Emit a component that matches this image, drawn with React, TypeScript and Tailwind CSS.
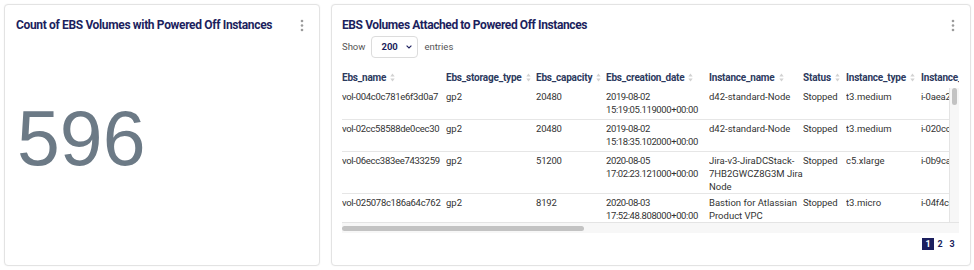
import React from "react";

const SortIcon = () => (
  <svg width="5" height="9" viewBox="0 0 5 9" className="ml-[4px] shrink-0">
    <path d="M2.5 0.6 L4.7 3.6 H0.3 Z" fill="#d2d2d2" />
    <path d="M2.5 8.4 L4.7 5.4 H0.3 Z" fill="#d2d2d2" />
  </svg>
);

const Kebab = () => (
  <svg width="4" height="13" viewBox="0 0 4 13" className="shrink-0">
    <circle cx="2" cy="2" r="1.3" fill="#9b9b9b" />
    <circle cx="2" cy="6.5" r="1.3" fill="#9b9b9b" />
    <circle cx="2" cy="11" r="1.3" fill="#9b9b9b" />
  </svg>
);

const columns = [
  { label: "Ebs_name", w: "w-[104px]", t: "tracking-[-0.3px]" },
  { label: "Ebs_storage_type", w: "w-[90px]", t: "tracking-[0px]" },
  { label: "Ebs_capacity", w: "w-[70px]", t: "tracking-[-0.2px]" },
  { label: "Ebs_creation_date", w: "w-[103px]", t: "tracking-[-0.4px]" },
  { label: "Instance_name", w: "w-[94px]", t: "tracking-[0px]" },
  { label: "Status", w: "w-[43px]", t: "tracking-[-0.1px]" },
  { label: "Instance_type", w: "w-[75px]", t: "tracking-[0px]" },
  { label: "Instance_id", w: "w-[120px]", t: "tracking-[-0.2px]" },
];

const rows: { h: string; cells: string[][] }[] = [
  {
    h: "h-[32px]",
    cells: [
      ["vol-004c0c781e6f3d0a7"],
      ["gp2"],
      ["20480"],
      ["2019-08-02", "15:19:05.119000+00:00"],
      ["d42-standard-Node"],
      ["Stopped"],
      ["t3.medium"],
      ["i-0aea24c9d1f3b7e21"],
    ],
  },
  {
    h: "h-[32px]",
    cells: [
      ["vol-02cc58588de0cec30"],
      ["gp2"],
      ["20480"],
      ["2019-08-02", "15:18:35.102000+00:00"],
      ["d42-standard-Node"],
      ["Stopped"],
      ["t3.medium"],
      ["i-020cc7b1e5a9d3f48"],
    ],
  },
  {
    h: "h-[42px]",
    cells: [
      ["vol-06ecc383ee7433259"],
      ["gp2"],
      ["51200"],
      ["2020-08-05", "17:02:23.121000+00:00"],
      ["Jira-v3-JiraDCStack-", "7HB2GWCZ8G3M Jira", "Node"],
      ["Stopped"],
      ["c5.xlarge"],
      ["i-0b9ca3e7f21d8c645"],
    ],
  },
  {
    h: "h-[32px]",
    cells: [
      ["vol-025078c186a64c762"],
      ["gp2"],
      ["8192"],
      ["2020-08-03", "17:52:48.808000+00:00"],
      ["Bastion for Atlassian", "Product VPC"],
      ["Stopped"],
      ["t3.micro"],
      ["i-04f4c8a2d6e1b9357"],
    ],
  },
];

export default function App() {
  return (
    <div
      className="w-[974px] h-[270px] bg-white flex gap-[11px] p-[4px]"
      style={{ fontFamily: "Roboto, 'Liberation Sans', sans-serif" }}
    >
      {/* Left card */}
      <div className="w-[316px] h-[262px] shrink-0 bg-white border border-[#e3e3e3] rounded-[4px] shadow-[0_0_2px_rgba(0,0,0,0.06)] pl-[11px] pr-[15px] pt-[12px] flex flex-col">
        <div className="flex items-center justify-between h-[16px]">
          <div className="text-[12px] leading-[16px] font-bold tracking-[-0.35px] text-[#1c1f5e] whitespace-nowrap">
            Count of EBS Volumes with Powered Off Instances
          </div>
          <Kebab />
        </div>
        <div
          className="mt-[67px] ml-[1px] text-[77px] leading-[77px] text-[#6c7a86]"
          style={{ fontFamily: "'Liberation Sans', Arial, sans-serif" }}
        >
          596
        </div>
      </div>

      {/* Right card */}
      <div className="w-[640px] h-[262px] shrink-0 bg-white border border-[#e3e3e3] rounded-[4px] shadow-[0_0_2px_rgba(0,0,0,0.06)] pl-[10px] pr-[11px] pt-[12px] flex flex-col">
        <div className="flex items-center justify-between h-[16px] pr-[4px]">
          <div className="text-[12px] leading-[16px] font-bold tracking-[-0.4px] text-[#1c1f5e] whitespace-nowrap">
            EBS Volumes Attached to Powered Off Instances
          </div>
          <Kebab />
        </div>

        <div className="mt-[3px] h-[22px] flex items-center text-[9.5px] text-[#555]">
          <span>Show</span>
          <div className="ml-[6px] w-[47px] h-[22px] border border-[#dcdcdc] rounded-[4px] flex items-center justify-between pl-[9px] pr-[5px]">
            <span className="font-bold text-[#1c1f5e]">200</span>
            <svg width="6" height="4" viewBox="0 0 6 4">
              <path d="M0.6 0.6 L3 3 L5.4 0.6" stroke="#1c1f5e" strokeWidth="1.1" fill="none" />
            </svg>
          </div>
          <span className="ml-[6px]">entries</span>
        </div>

        {/* header */}
        <div className="mt-[8px] h-[22px] w-[617px] overflow-hidden flex items-center">
          {columns.map((c) => (
            <div key={c.label} className={`${c.w} shrink-0 flex items-center`}>
              <span className="text-[10px] font-bold tracking-[-0.2px] text-[#2d3a5e] whitespace-nowrap">
                {c.label}
              </span>
              <SortIcon />
            </div>
          ))}
        </div>

        {/* body + vertical scrollbar */}
        <div className="h-[134px] w-[617px] flex">
          <div className="w-[607px] h-[134px] overflow-hidden">
            {rows.map((r, i) => (
              <div key={i} className={`${r.h} flex border-b border-[#e6e6e6] shrink-0`}>
                {r.cells.map((cell, j) => (
                  <div
                    key={j}
                    className={`${columns[j].w} ${columns[j].t} shrink-0 pt-[2px] text-[9.5px] leading-[13px] text-[#333] whitespace-nowrap overflow-hidden`}
                  >
                    {cell.map((line, k) => (
                      <div key={k}>{line}</div>
                    ))}
                  </div>
                ))}
              </div>
            ))}
          </div>
          <div className="w-[10px] h-[134px] bg-[#f7f7f7] border-l border-[#e4e4e4] flex justify-center">
            <div className="w-[5px] h-[17px] rounded-full bg-[#c3c3c3]" />
          </div>
        </div>

        {/* horizontal scrollbar */}
        <div className="h-[11px] w-[617px] bg-[#f7f7f7] border-t border-[#e4e4e4] flex items-center">
          <div className="w-[242px] h-[5px] rounded-full bg-[#c3c3c3]" />
        </div>

        {/* pagination */}
        <div className="mt-[5px] w-[616px] flex justify-end">
          <div className="w-[12px] h-[12px] bg-[#1c1f5e] text-white text-[9px] font-bold flex items-center justify-center leading-none">
            1
          </div>
          <div className="w-[12px] h-[12px] text-[#1c1f5e] text-[9px] font-bold flex items-center justify-center leading-none">
            2
          </div>
          <div className="w-[12px] h-[12px] text-[#1c1f5e] text-[9px] font-bold flex items-center justify-center leading-none">
            3
          </div>
        </div>
      </div>
    </div>
  );
}
